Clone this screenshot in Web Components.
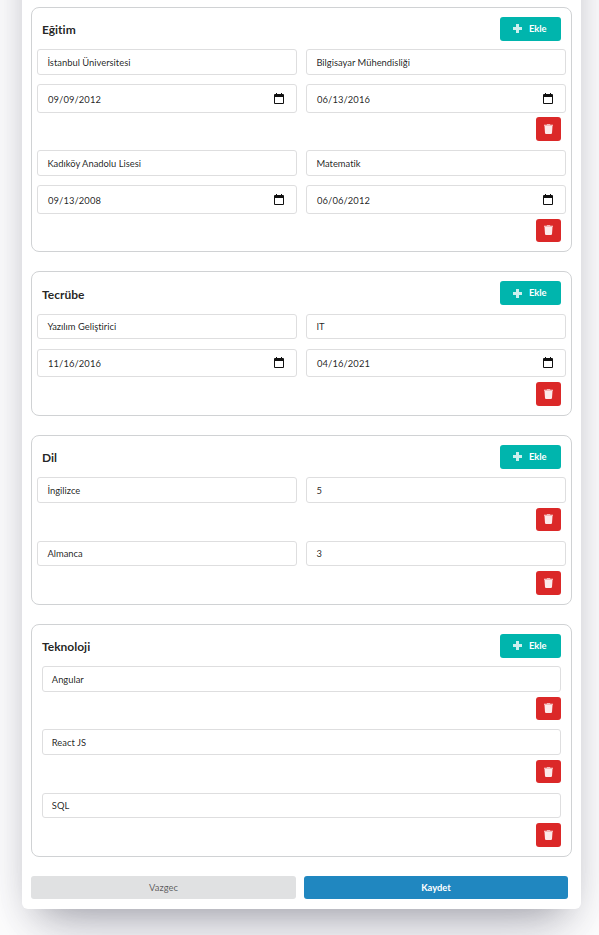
<!DOCTYPE html>
<html lang="tr">
<head>
<meta charset="utf-8">
<title>Özgeçmiş</title>
<style>
html,body{margin:0;height:935px;overflow:hidden;background:#fff}
body{font-family:Lato,"Liberation Sans",sans-serif;font-size:9.4px;color:rgba(0,0,0,.87);font-variant-ligatures:none}
</style>
</head>
<body>
<cv-card>
  <cv-section heading="Eğitim">
    <cv-entry><cv-field>İstanbul Üniversitesi</cv-field><cv-field>Bilgisayar Mühendisliği</cv-field><cv-date value="09/09/2012"></cv-date><cv-date value="06/13/2016"></cv-date></cv-entry>
    <cv-entry><cv-field>Kadıköy Anadolu Lisesi</cv-field><cv-field>Matematik</cv-field><cv-date value="09/13/2008"></cv-date><cv-date value="06/06/2012"></cv-date></cv-entry>
  </cv-section>
  <cv-section heading="Tecrübe" style="--after:5.2px;--head-gap:8.8px;margin-top:-.3px">
    <cv-entry><cv-field>Yazılım Geliştirici</cv-field><cv-field>IT</cv-field><cv-date value="11/16/2016"></cv-date><cv-date value="04/16/2021"></cv-date></cv-entry>
  </cv-section>
  <cv-section heading="Dil" style="--after:5px;--entry-gap:9.25px">
    <cv-entry><cv-field>İngilizce</cv-field><cv-field>5</cv-field></cv-entry>
    <cv-entry><cv-field>Almanca</cv-field><cv-field>3</cv-field></cv-entry>
  </cv-section>
  <cv-section heading="Teknoloji" style="--after:5px;--entry-gap:9.25px;--cols:1fr;--inset:10px;--field-pad:8.8px;margin-top:.25px">
    <cv-entry><cv-field>Angular</cv-field></cv-entry>
    <cv-entry><cv-field>React JS</cv-field></cv-entry>
    <cv-entry><cv-field>SQL</cv-field></cv-entry>
  </cv-section>
  <cv-button slot="actions" kind="cancel">Vazgec</cv-button>
  <cv-button slot="actions" kind="save">Kaydet</cv-button>
</cv-card>
<script>
const define = (name, html, setup) => customElements.define(name, class extends HTMLElement {
  constructor() {
    super();
    this.attachShadow({mode: 'open'}).innerHTML = html;
  }
  connectedCallback() { if (setup) setup(this, this.shadowRoot); }
});

define('cv-button', `<style>
:host{display:flex;align-items:center;justify-content:center;box-sizing:border-box;height:23.6px;border-radius:3px;font-weight:700;line-height:12px;color:#fff}
:host([kind=add]){width:61px;background:#00b5ad;gap:7px;padding-right:1.500px}
:host([kind=remove]){width:25px;background:#db2828}
:host([kind=save]){background:#2087c0;height:23px;padding-top:1.500px}
:host([kind=cancel]){background:#e0e1e2;color:rgba(0,0,0,.6);font-weight:400;height:23px;padding-top:1.500px}
::slotted(svg){display:block}
</style><slot></slot>`);

define('cv-field', `<style>
:host{display:flex;align-items:center;box-sizing:border-box;height:25.4px;padding:1.600px var(--field-pad,9.4px) 0;border:1px solid #dededf;border-radius:3px;background:#fff;line-height:12px}
</style><span><slot></slot></span>`);

define('cv-date', `<style>
:host{display:flex;align-items:center;justify-content:space-between;box-sizing:border-box;height:28.4px;margin-top:9.6px;padding:2px 12px 0 10px;border:1px solid #dededf;border-radius:3px;background:#fff;line-height:12px}
span{letter-spacing:.1px;padding-top:.5px}
svg{display:block;margin-top:-2px}
</style><span></span><svg width="10" height="11" viewBox="0 0 10 11"><path fill="#111" fill-rule="evenodd" d="M1 1h1V0h1v1h4V0h1v1h1q1 0 1 1v8q0 1-1 1H1q-1 0-1-1V2q0-1 1-1zM1 4v6h8V4z"/></svg>`,
(el, root) => { root.querySelector('span').textContent = el.getAttribute('value'); });

define('cv-entry', `<style>
:host{display:block}
.grid{display:grid;grid-template-columns:var(--cols,1fr 1fr);column-gap:9px;padding:0 var(--inset,5px)}
cv-button{margin:var(--after,4.8px) 10px 0 auto}
</style><div class="grid"><slot></slot></div>
<cv-button kind="remove"><svg width="9" height="10" viewBox="0 0 9 10"><path fill="#fff" fill-opacity=".9" d="M0 .8h2.6L3.1 .3h2.8l.5.5H9v1H0zM.5 2.100h8l-.5 7q-.1.9-1 .9H2q-.9 0-1-.9z"/></svg></cv-button>`);

define('cv-section', `<style>
:host{display:block;box-sizing:border-box;border:1px solid #d0d2d4;border-radius:8px;padding:9px 0 9px}
header{display:flex;align-items:center;justify-content:space-between;height:23.6px;margin-bottom:var(--head-gap,8.5px);padding:0 10px}
h4{margin:2px 0 0;font-size:12px;line-height:15px;font-weight:700}
.entries{display:grid;row-gap:var(--entry-gap,9.4px)}
</style><header><h4></h4><cv-button kind="add"><svg width="9" height="9" viewBox="0 0 9 9"><path fill="#fff" fill-opacity=".8" d="M3 0h3v3h3v3H6v3H3V6H0V3h3z"/></svg><span>Ekle</span></cv-button></header><div class="entries"><slot></slot></div>`,
(el, root) => { root.querySelector('h4').textContent = el.getAttribute('heading'); });

define('cv-card', `<style>
:host{display:block;box-sizing:border-box;width:559px;height:1109px;margin:-200px 0 0 22px;padding:207.150px 9px 0;border-radius:6px;background:#fff;box-shadow:0 30px 60px -12px rgba(50,50,93,.25),0 18px 36px -18px rgba(0,0,0,.3)}
.sections{display:grid;row-gap:19.4px}
footer{display:grid;grid-template-columns:265px 264px;column-gap:8px;margin-top:19.4px}
</style><div class="sections"><slot></slot></div><footer><slot name="actions"></slot></footer>`);
</script>
</body>
</html>
